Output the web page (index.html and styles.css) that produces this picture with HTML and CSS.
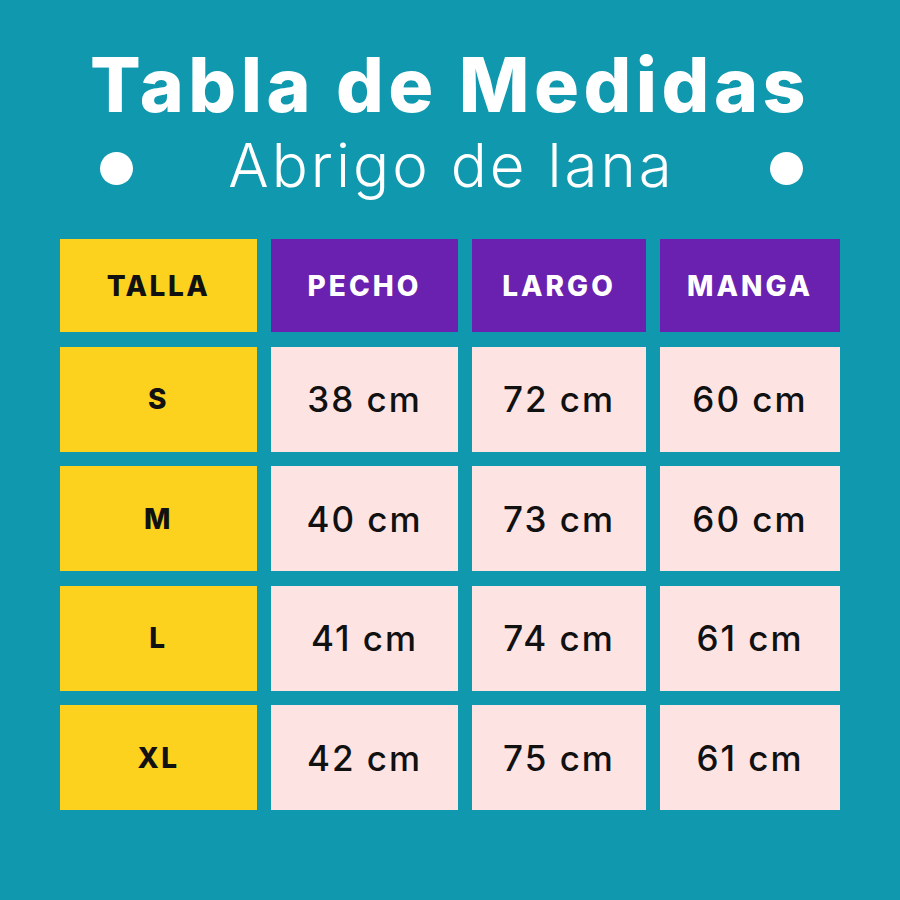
FILE: index.html
```html
<!DOCTYPE html>
<html lang="es">
<head>
<meta charset="utf-8">
<title>Tabla de Medidas</title>
<link rel="stylesheet" href="styles.css">
</head>
<body>
<div class="page">
  <header class="head">
    <h1 class="title">Tabla de Medidas</h1>
    <div class="sub">
      <span class="dot"></span>
      <span class="sub-text">Abrigo de lana</span>
      <span class="dot"></span>
    </div>
  </header>
  <div class="table">
    <div class="cell size head-cell">TALLA</div>
    <div class="cell col">PECHO</div>
    <div class="cell col">LARGO</div>
    <div class="cell col">MANGA</div>

    <div class="cell size">S</div>
    <div class="cell val">38 cm</div>
    <div class="cell val">72 cm</div>
    <div class="cell val">60 cm</div>

    <div class="cell size">M</div>
    <div class="cell val">40 cm</div>
    <div class="cell val">73 cm</div>
    <div class="cell val">60 cm</div>

    <div class="cell size">L</div>
    <div class="cell val">41 cm</div>
    <div class="cell val">74 cm</div>
    <div class="cell val">61 cm</div>

    <div class="cell size">XL</div>
    <div class="cell val">42 cm</div>
    <div class="cell val">75 cm</div>
    <div class="cell val">61 cm</div>
  </div>
</div>
</body>
</html>
```
FILE: styles.css
```css
html, body {
  margin: 0;
  padding: 0;
  background: #0f98ae;
}
.page {
  width: 900px;
  height: 900px;
  background: #0f98ae;
  font-family: "Inter", "Liberation Sans", sans-serif;
  color: #fff;
  box-sizing: border-box;
  padding-top: 48px;
}
.head {
  display: flex;
  flex-direction: column;
  align-items: center;
}
.title {
  margin: 0;
  font-size: 75px;
  line-height: 74px;
  font-weight: 800;
  letter-spacing: 4.5px;
  color: #fff;
}
.sub {
  margin-top: 13px;
  width: 703px;
  height: 60px;
  display: flex;
  justify-content: space-between;
  align-items: center;
  margin-left: 3px;
}
.sub-text {
  font-size: 60px;
  line-height: 60px;
  font-weight: 300;
  letter-spacing: 3px;
}
.dot {
  width: 33px;
  height: 33px;
  border-radius: 50%;
  background: #fff;
  margin-top: 6px;
}
.table {
  margin-top: 44px;
  margin-left: 60px;
  display: grid;
  grid-template-columns: 197px 187px 174px 180px;
  grid-template-rows: 93px 105px 105px 105px 105px;
  column-gap: 14px;
  row-gap: 14.5px;
}
.cell {
  display: flex;
  align-items: center;
  justify-content: center;
  color: #111;
}
.size {
  background: #fdd21f;
  font-size: 28px;
  font-weight: 800;
  letter-spacing: 2.5px;
}
.col {
  background: #6a21b0;
  color: #fff;
  font-size: 28px;
  font-weight: 800;
  letter-spacing: 3px;
}
.val {
  background: #fde4e3;
  font-size: 35px;
  font-weight: 500;
  letter-spacing: 2px;
}
```
